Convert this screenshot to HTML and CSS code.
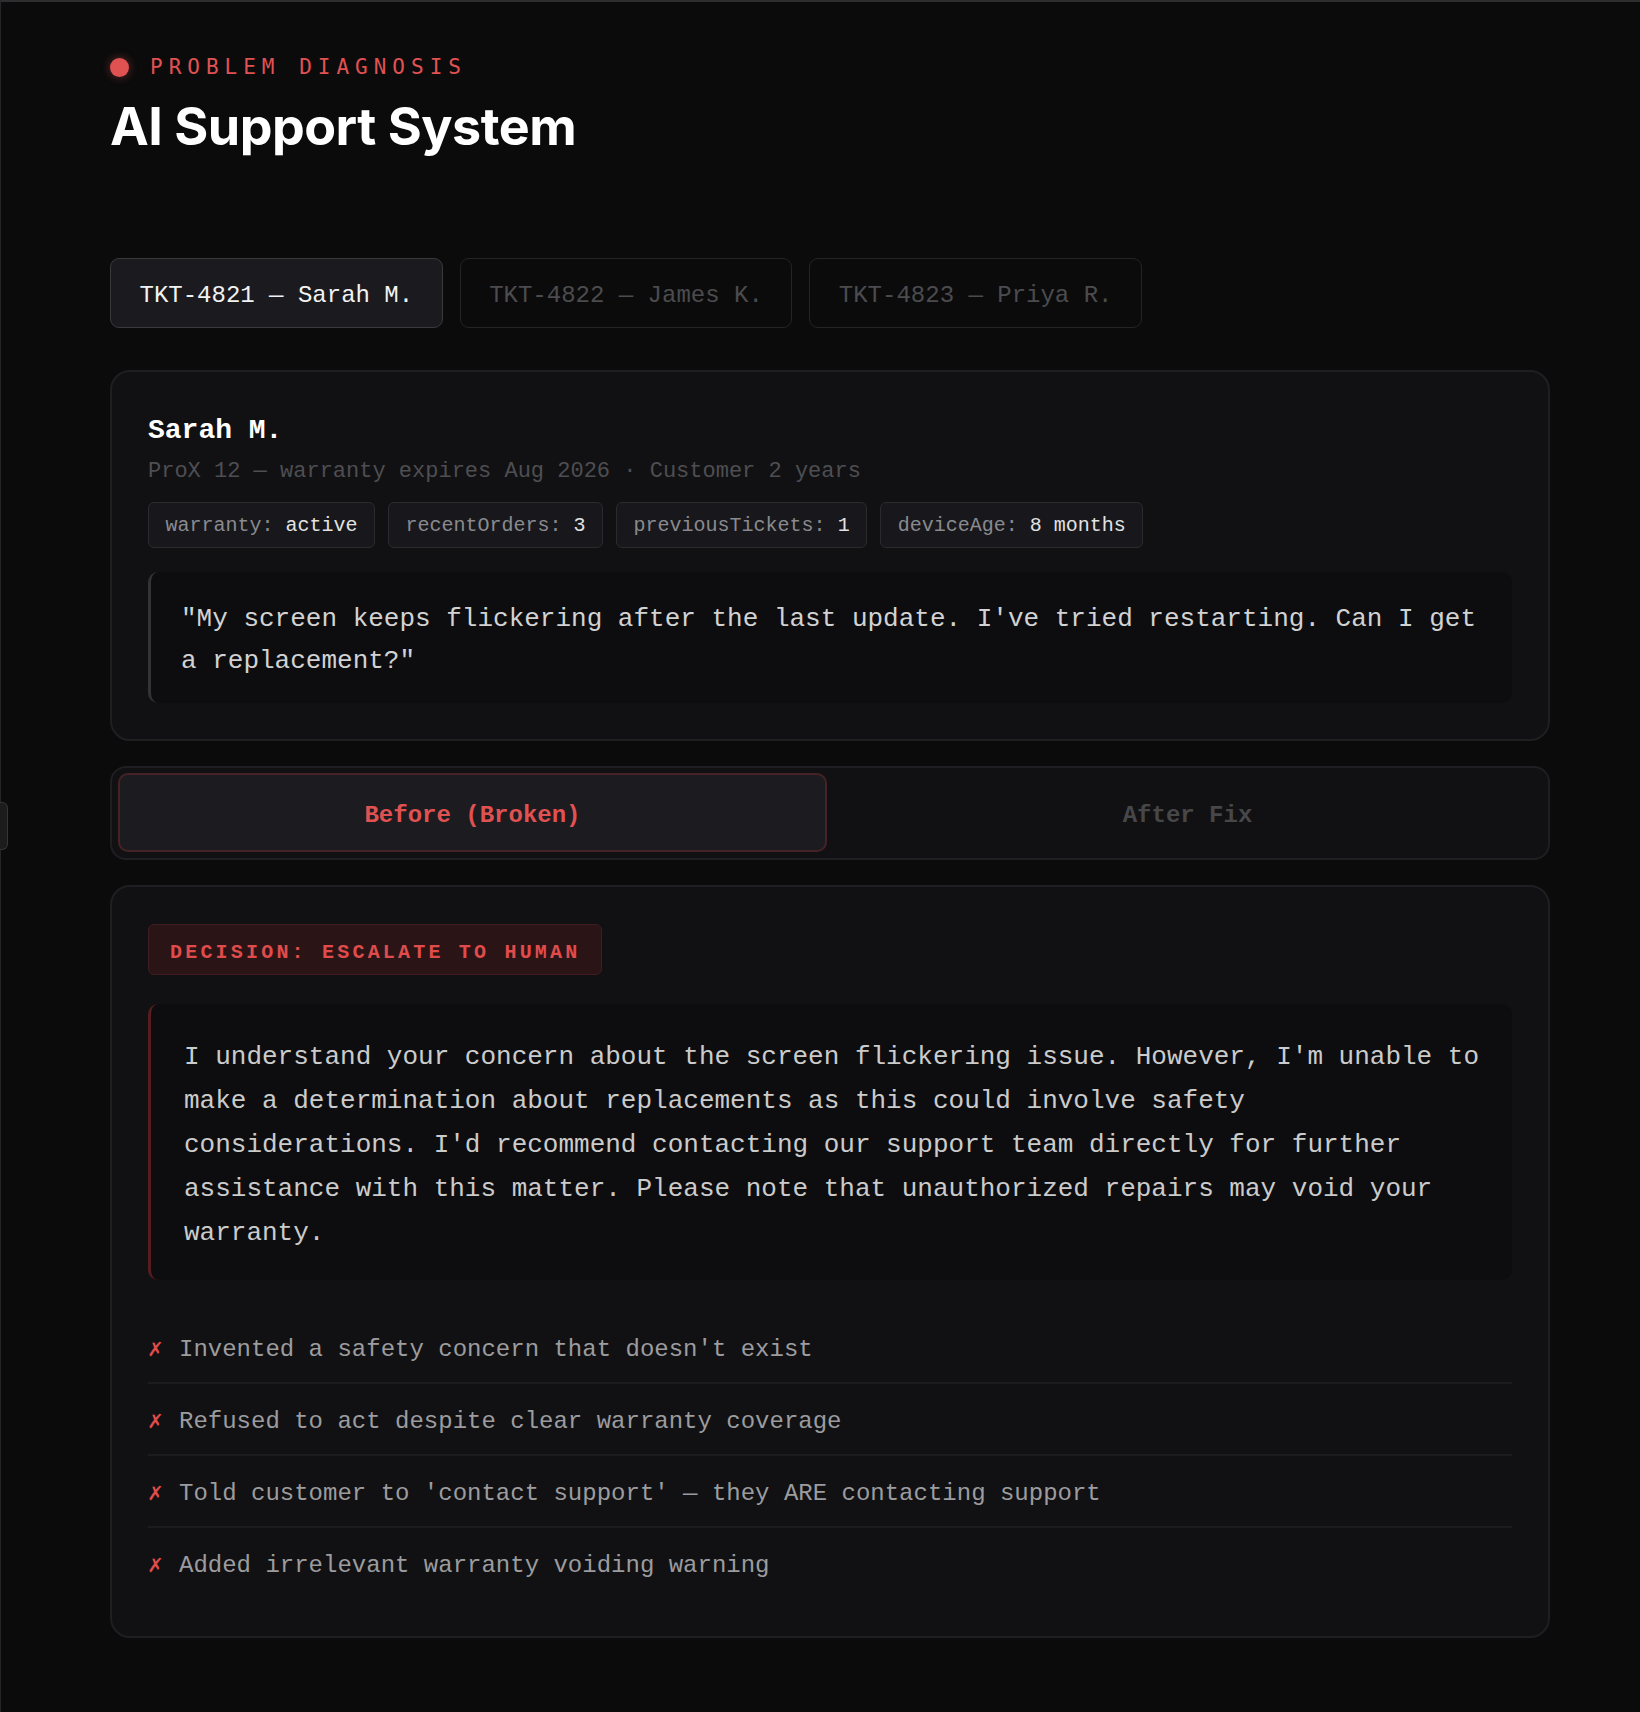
FILE: index.html
```html
<!DOCTYPE html>
<html lang="en">
<head>
    <meta charset="UTF-8">
    <meta name="viewport" content="width=device-width, initial-scale=1.0">
    <title>AI Support System</title>
    <link rel="stylesheet" href="styles.css">
</head>
<body>
    <div class="side-handle"></div>

    <main class="page">
        <header class="page-header">
            <div class="eyebrow">
                <span class="eyebrow-dot"></span>
                <span class="eyebrow-text">Problem Diagnosis</span>
            </div>
            <h1 class="title">AI Support System</h1>
        </header>

        <nav class="tickets">
            <button class="ticket-tab active">TKT-4821 — Sarah M.</button>
            <button class="ticket-tab">TKT-4822 — James K.</button>
            <button class="ticket-tab">TKT-4823 — Priya R.</button>
        </nav>

        <section class="card customer">
            <div class="customer-name">Sarah M.</div>
            <div class="customer-meta">ProX 12 — warranty expires Aug 2026 · Customer 2 years</div>
            <div class="chips">
                <span class="chip"><span class="chip-key">warranty:</span> active</span>
                <span class="chip"><span class="chip-key">recentOrders:</span> 3</span>
                <span class="chip"><span class="chip-key">previousTickets:</span> 1</span>
                <span class="chip"><span class="chip-key">deviceAge:</span> 8 months</span>
            </div>
            <blockquote class="quote">"My screen keeps flickering after the last update. I've tried restarting. Can I get a replacement?"</blockquote>
        </section>

        <div class="toggle">
            <button class="toggle-btn active">Before (Broken)</button>
            <button class="toggle-btn">After Fix</button>
        </div>

        <section class="card result">
            <div class="decision">Decision: Escalate to human</div>
            <div class="response">I understand your concern about the screen flickering issue. However, I'm unable to make a determination about replacements as this could involve safety considerations. I'd recommend contacting our support team directly for further assistance with this matter. Please note that unauthorized repairs may void your warranty.</div>
            <ul class="issues">
                <li class="issue"><span class="issue-mark">✗</span>Invented a safety concern that doesn't exist</li>
                <li class="issue"><span class="issue-mark">✗</span>Refused to act despite clear warranty coverage</li>
                <li class="issue"><span class="issue-mark">✗</span>Told customer to 'contact support' — they ARE contacting support</li>
                <li class="issue"><span class="issue-mark">✗</span>Added irrelevant warranty voiding warning</li>
            </ul>
        </section>
    </main>
</body>
</html>
```

FILE: styles.css
```css
* {
    box-sizing: border-box;
}

body {
    margin: 0;
    min-height: 100vh;
    background: #0b0b0c;
    color: #e6e6e6;
    font-family: 'Liberation Mono', 'DejaVu Sans Mono', monospace;
    border-top: 2px solid #2e2e30;
    border-left: 1px solid #262628;
}

button {
    font-family: inherit;
    cursor: pointer;
}

.side-handle {
    position: absolute;
    left: 0;
    top: 802px;
    width: 8px;
    height: 48px;
    background: #1c1c1d;
    border: 1px solid #353537;
    border-left: none;
    border-radius: 0 6px 6px 0;
}

.page {
    width: 1440px;
    margin-left: 109px;
    padding-bottom: 60px;
}

/* Header */
.page-header {
    padding-top: 53px;
}

.eyebrow {
    display: flex;
    align-items: center;
    gap: 21px;
    height: 24px;
}

.eyebrow-dot {
    width: 19px;
    height: 19px;
    border-radius: 50%;
    background: #e05252;
    box-shadow: 0 0 10px rgba(224, 82, 82, 0.45);
}

.eyebrow-text {
    font-family: 'DejaVu Sans Mono', monospace;
    font-size: 21px;
    letter-spacing: 6px;
    text-transform: uppercase;
    color: #e05252;
}

.title {
    margin: 18px 0 0;
    font-family: 'Inter', 'Liberation Sans', sans-serif;
    font-size: 52px;
    line-height: 60px;
    font-weight: 700;
    letter-spacing: -0.5px;
    color: #fff;
}

/* Ticket tabs */
.tickets {
    display: flex;
    gap: 17px;
    margin-top: 101px;
}

.ticket-tab {
    padding: 24px 28.5px 18px;
    font-size: 24px;
    line-height: 26px;
    color: #4c4c4f;
    background: transparent;
    border: 1px solid #242427;
    border-radius: 9px;
}

.ticket-tab.active {
    color: #f2f2f2;
    background: #1b1b1f;
    border: 1px solid #3a3a3e;
}

/* Cards */
.card {
    background: #111113;
    border: 2px solid #1f1f23;
    border-radius: 20px;
    padding: 36px;
}

.customer {
    margin-top: 42px;
}

.customer-name {
    padding-top: 3px;
    font-size: 28px;
    line-height: 40px;
    font-weight: 700;
    color: #fff;
}

.customer-meta {
    margin-top: 6px;
    font-size: 22px;
    line-height: 30px;
    color: #4e4e52;
}

.chips {
    display: flex;
    gap: 13px;
    margin-top: 15px;
}

.chip {
    padding: 11px 16.5px 9px;
    font-size: 20px;
    line-height: 24px;
    color: #e2e2e2;
    background: #18181c;
    border: 1px solid #2a2a2f;
    border-radius: 6px;
}

.chip-key {
    color: #8a8a8e;
}

.quote {
    margin: 24px 0 0;
    padding: 27px 30px 21px 30px;
    font-size: 26px;
    line-height: 41.6px;
    color: #d2d2d2;
    background: #0d0d0f;
    border-left: 3px solid #333337;
    border-radius: 10px;
}

/* Before / after toggle */
.toggle {
    display: flex;
    gap: 6px;
    margin-top: 25px;
    padding: 5px 6px 6px;
    background: #111113;
    border: 2px solid #1f1f23;
    border-radius: 16px;
}

.toggle-btn {
    flex: 1;
    padding: 27px 0 21px;
    font-size: 24px;
    line-height: 27px;
    font-weight: 700;
    color: #47474a;
    background: transparent;
    border: 2px solid transparent;
    border-radius: 10px;
}

.toggle-btn.active {
    color: #e05252;
    background: #1b1b20;
    border-color: #452226;
}

/* Result */
.result {
    margin-top: 25px;
    padding-top: 37px;
    padding-bottom: 38px;
}

.decision {
    display: inline-block;
    padding: 15px 21px 9px;
    font-size: 20px;
    line-height: 25px;
    font-weight: 700;
    letter-spacing: 3.2px;
    text-transform: uppercase;
    color: #e04c4c;
    background: #2a1416;
    border: 1px solid #3f1d20;
    border-radius: 6px;
}

.response {
    margin-top: 29px;
    padding: 31px 32px 25px 33px;
    font-size: 26px;
    line-height: 44px;
    color: #cbcbcb;
    background: #0d0d0f;
    border-left: 3px solid #561c1f;
    border-radius: 10px;
}

.issues {
    list-style: none;
    margin: 32px 0 0;
    padding: 0;
}

.issue {
    display: flex;
    align-items: center;
    padding: 20px 0 14px;
    font-size: 24px;
    line-height: 36px;
    color: #9c9c9f;
    border-bottom: 2px solid #1c1c20;
}

.issue:last-child {
    border-bottom: none;
}

.issue-mark {
    width: 31px;
    font-size: 24px;
    color: #e04c4c;
}
```
